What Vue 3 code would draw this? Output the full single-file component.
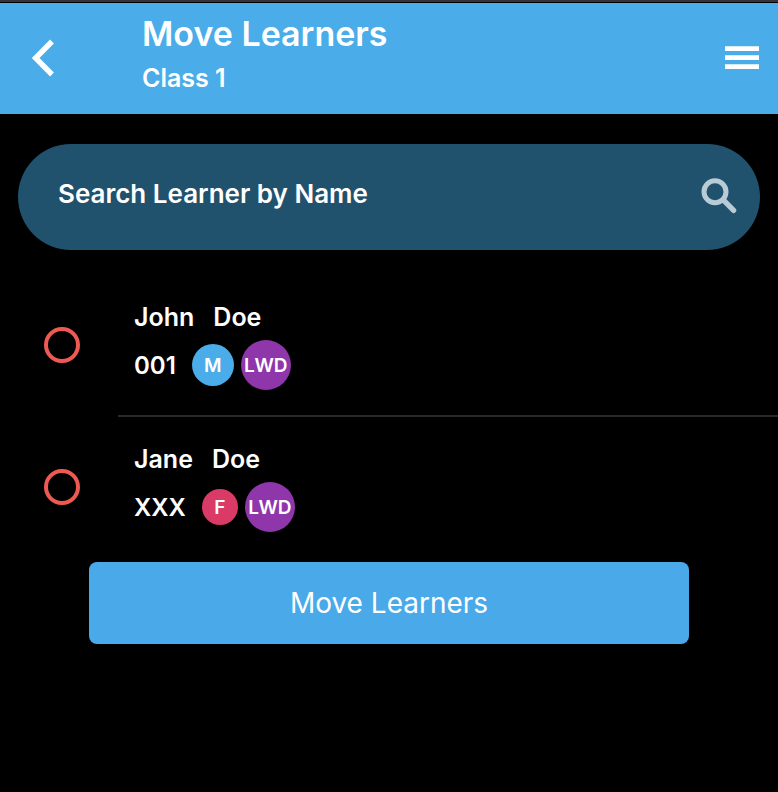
<script setup>
import { ref } from 'vue'

const query = ref('')
const selected = ref([])
const learners = [
  { id: 'john', first: 'John', last: 'Doe', code: '001', gender: 'M' },
  { id: 'jane', first: 'Jane', last: 'Doe', code: 'XXX', gender: 'F' }
]
</script>

<template>
  <div class="page">
    <header class="bar">
      <button class="icon-button" type="button" aria-label="Back">
        <svg width="24" height="38" viewBox="0 0 24 38" fill="none" stroke="#fff" stroke-width="5.4">
          <path d="M21 2.5 4.6 19 21 35.5" />
        </svg>
      </button>
      <div class="titles">
        <h1>Move Learners</h1>
        <p>Class 1</p>
      </div>
      <button class="icon-button" type="button" aria-label="Menu">
        <svg width="34" height="23" viewBox="0 0 34 23" fill="#fff">
          <path d="M0 .3h34v4.7H0zM0 9.3h34v4.7H0zM0 18.3h34v4.7H0z" />
        </svg>
      </button>
    </header>

    <main>
      <form class="search" role="search" @submit.prevent>
        <input v-model="query" type="text" placeholder="Search Learner by Name" aria-label="Search Learner by Name" />
        <button class="icon-button" type="submit" aria-label="Search">
          <svg width="36" height="38" viewBox="0 0 36 38" fill="none" stroke="#b9cbd6">
            <circle cx="14" cy="13.7" r="11" stroke-width="5" />
            <path d="M23 22.7 32.6 32.3" stroke-width="5.4" stroke-linecap="round" />
          </svg>
        </button>
      </form>

      <ul class="learners">
        <li v-for="learner in learners" :key="learner.id">
          <input :id="learner.id" v-model="selected" type="checkbox" :value="learner.id" />
          <label :for="learner.id">
            <span class="name"><span>{{ learner.first }}</span><span>{{ learner.last }}</span></span>
            <span class="details">
              <span class="code">{{ learner.code }}</span>
              <span class="badge" :class="learner.gender === 'M' ? 'male' : 'female'">{{ learner.gender }}</span>
              <span class="badge lwd">LWD</span>
            </span>
          </label>
        </li>
      </ul>

      <button class="move" type="button">Move Learners</button>
    </main>
  </div>
</template>

<style>
body {
  margin: 0;
  background: #000;
}
</style>

<style scoped>
.page {
  min-height: 100vh;
  box-sizing: border-box;
  border-top: 2px solid #34333b;
  background: #000;
  color: #fff;
  font-family: Inter, "Liberation Sans", sans-serif;
  font-size: 26px;
  font-weight: 600;
}

button,
input {
  margin: 0;
  padding: 0;
  border: 0;
  background: none;
  color: inherit;
  font: inherit;
}

button {
  cursor: pointer;
}

.icon-button {
  display: flex;
  flex: none;
}

.bar {
  display: flex;
  align-items: center;
  margin-top: 1px;
  min-height: 111px;
  padding: 0 19px 2px 31px;
  box-sizing: border-box;
  background: #4aace8;
}

.titles {
  flex: 1;
  padding: 0 16px 8px 87px;
}

h1,
p {
  margin: 0;
}

h1 {
  font-size: 34px;
  line-height: 48px;
  font-weight: 600;
}

p {
  font-size: 25px;
  line-height: 40px;
}

.search {
  display: flex;
  align-items: center;
  gap: 16px;
  margin: 30px 18px 25px;
  padding: 0 23px 0 40px;
  border-radius: 53px;
  background: #21526d;
}

.search input {
  flex: 1;
  min-width: 0;
  height: 98px;
  padding-bottom: 8px;
  outline: none;
}

.search input::placeholder {
  color: #fff;
  opacity: 1;
}

.learners {
  margin: 0;
  padding: 0;
  list-style: none;
}

.learners li {
  display: flex;
  align-items: center;
  gap: 38px;
  padding-left: 44px;
}

.learners input {
  flex: none;
  width: 36px;
  height: 36px;
  margin-bottom: 2px;
  box-sizing: border-box;
  border: 4px solid #ee5951;
  border-radius: 50%;
  appearance: none;
}

.learners input:checked {
  background: #ee5951;
}

.learners label {
  flex: 1;
  padding: 22px 16px 25px;
  border-bottom: 2px solid #292929;
}

.learners li:last-child label {
  border-bottom-color: transparent;
}

.name {
  display: flex;
  gap: 19px;
  margin-bottom: 3px;
  font-size: 25px;
  line-height: 40px;
}

.details {
  display: flex;
  align-items: center;
  gap: 7px;
}

.code {
  margin-right: 9px;
  font-size: 24px;
}

.badge {
  display: flex;
  align-items: center;
  justify-content: center;
  border-radius: 50%;
  font-size: 19px;
}

.male {
  width: 42px;
  height: 42px;
  background: #4aace8;
}

.female {
  width: 36px;
  height: 36px;
  background: #d93a66;
}

.lwd {
  width: 50px;
  height: 50px;
  background: #8e36aa;
}

.move {
  display: block;
  width: calc(100% - 32px);
  max-width: 600px;
  height: 82px;
  margin: 3px auto 0;
  border-radius: 8px;
  background: #4aa9e8;
  font-size: 28px;
  font-weight: 400;
}
</style>
